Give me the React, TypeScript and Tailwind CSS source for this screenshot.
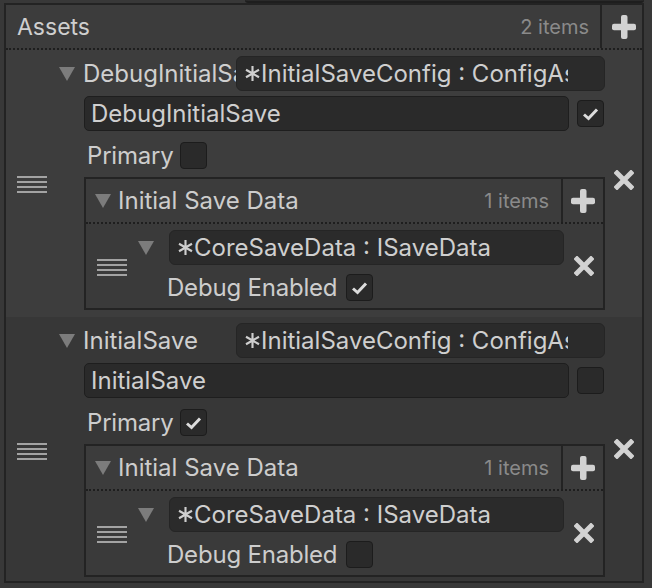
import React from 'react';

const font = { fontFamily: 'Inter, "Noto Sans", sans-serif' };

const Triangle = () => (
  <svg width="16" height="14" viewBox="0 0 16 14" className="shrink-0">
    <polygon points="0,0 16,0 8,14" fill="#7c7c7c" />
  </svg>
);

const Handle = () => (
  <svg width="30" height="18" viewBox="0 0 30 18">
    {[1, 6, 11, 16].map((y) => (
      <rect key={y} x="0" y={y - 1} width="30" height="2" fill="#a3a3a3" />
    ))}
  </svg>
);

const Plus = () => (
  <svg width="24" height="24" viewBox="0 0 24 24">
    <rect x="9" y="0" width="6.5" height="24" rx="2" fill="#d2d2d2" />
    <rect x="0" y="8.75" width="24" height="6.5" rx="2" fill="#d2d2d2" />
  </svg>
);

const Cross = () => (
  <svg width="20" height="20" viewBox="0 0 20 20">
    <path d="M3 3 L17 17 M17 3 L3 17" stroke="#d2d2d2" strokeWidth="5" strokeLinecap="square" />
  </svg>
);

const Star = () => (
  <svg width="17" height="17" viewBox="0 0 16 16" className="shrink-0">
    <path d="M8 1 V15 M1.9 4.5 L14.1 11.5 M1.9 11.5 L14.1 4.5" stroke="#cfcfcf" strokeWidth="2" />
  </svg>
);

const Check = ({ on }: { on: boolean }) => (
  <div className="w-[27px] h-[27px] shrink-0 rounded-[4px] bg-[#2a2a2a] border border-[#1c1c1c] flex items-center justify-center">
    {on && (
      <svg width="17" height="14" viewBox="0 0 17 14">
        <path d="M2 7.5 L6.5 11.5 L15 2.5" stroke="#dcdcdc" strokeWidth="3" fill="none" />
      </svg>
    )}
  </div>
);

const ObjectField = ({ text, w }: { text: string; w: string }) => (
  <div className={`${w} h-[35px] shrink-0 rounded-[6px] bg-[#2b2b2b] border border-[#252525] flex items-center pl-[7px] pr-[36px]`}>
    <Star />
    <span className="overflow-hidden whitespace-nowrap text-[24px] leading-[30px] text-[#cfcfcf]">{text}</span>
  </div>
);

const InnerList = ({ debug }: { debug: boolean }) => (
  <div className="ml-[26px] mt-[8px] w-[521px] border-2 border-[#232323] bg-[#3c3c3c]">
    <div className="h-[45px] flex border-b-2 border-dotted border-[#1e1e1e]">
      <div className="flex-1 flex items-center pl-[9px]">
        <Triangle />
        <span className="ml-[7px] text-[24px] leading-[30px] text-[#cdcdcd]">Initial Save Data</span>
        <span className="ml-auto mr-[12px] text-[20px] leading-[26px] text-[#8a8a8a]">1 items</span>
      </div>
      <div className="w-[42px] border-l-2 border-[#232323] flex items-center justify-center">
        <Plus />
      </div>
    </div>
    <div className="flex pt-[6px] pb-[7px] bg-[#3a3a3a]">
      <div className="w-[52px] shrink-0 flex items-center justify-center pt-[4px]">
        <Handle />
      </div>
      <div className="w-[427px] shrink-0">
        <div className="flex items-center">
          <Triangle />
          <div className="ml-[15px]">
            <ObjectField text="CoreSaveData : ISaveData" w="w-[395px]" />
          </div>
        </div>
        <div className="flex items-center mt-[9px] pl-[29px]">
          <span className="w-[179px] text-[24px] leading-[27px] tracking-[-0.2px] text-[#cdcdcd]">Debug Enabled</span>
          <Check on={debug} />
        </div>
      </div>
      <div className="w-[38px] shrink-0 flex items-center justify-center">
        <Cross />
      </div>
    </div>
  </div>
);

const Element = ({
  name,
  active,
  primary,
  debug,
  bg,
  pad,
  crossPad,
}: {
  name: string;
  active: boolean;
  primary: boolean;
  debug: boolean;
  bg: string;
  pad: string;
  crossPad: string;
}) => (
  <div className={`flex ${bg} ${pad}`}>
    <div className="w-[52px] shrink-0 flex items-center justify-center pt-[4px]">
      <Handle />
    </div>
    <div className="w-[547px] shrink-0">
      <div className="flex items-center h-[35px]">
        <div className="ml-[1px]">
          <Triangle />
        </div>
        <span className="ml-[8px] w-[153px] overflow-hidden whitespace-nowrap text-[24px] leading-[30px] text-[#cfcfcf]">
          {name}
        </span>
        <ObjectField text="InitialSaveConfig : ConfigAsset" w="w-[369px]" />
      </div>
      <div className="flex items-center mt-[5px] pl-[26px]">
        <div className="w-[485px] h-[35px] rounded-[5px] bg-[#2a2a2a] border border-[#1e1e1e] flex items-center pl-[6px] text-[24px] leading-[30px] text-[#cfcfcf]">
          {name}
        </div>
        <div className="ml-[8px]">
          <Check on={active} />
        </div>
      </div>
      <div className="flex items-center mt-[11px] pl-[29px]">
        <span className="w-[93px] text-[24px] leading-[27px] tracking-[-0.2px] text-[#cdcdcd]">Primary</span>
        <Check on={primary} />
      </div>
      <InnerList debug={debug} />
    </div>
    <div className={`w-[37px] shrink-0 flex items-center justify-center ${crossPad}`}>
      <Cross />
    </div>
  </div>
);

export default function App() {
  return (
    <div className="w-[652px] h-[588px] bg-[#383838] overflow-hidden" style={font}>
      <div className="h-[3px] flex">
        <div className="ml-[245px] w-[399px] h-[3px] bg-[#2a2a2a] border-b-2 border-[#1e1e1e] rounded-b-[5px]" />
      </div>
      <div className="ml-[4px] w-[640px] border-2 border-[#232323]">
        <div className="h-[45px] flex bg-[#3c3c3c] border-b-2 border-dotted border-[#1e1e1e]">
          <div className="flex-1 flex items-center pl-[11px]">
            <span className="text-[23px] leading-[30px] text-[#cfcfcf]">Assets</span>
            <span className="ml-auto mr-[11px] text-[20px] leading-[26px] text-[#8a8a8a]">2 items</span>
          </div>
          <div className="w-[42px] border-l-2 border-[#232323] flex items-center justify-center pl-[3px]">
            <Plus />
          </div>
        </div>
        <Element
          name="DebugInitialSave"
          active={true}
          primary={false}
          debug={true}
          bg="bg-[#3d3d3d]"
          pad="pt-[6px] pb-[7px]"
          crossPad="pb-[7px]"
        />
        <Element
          name="InitialSave"
          active={false}
          primary={true}
          debug={false}
          bg="bg-[#373737]"
          pad="pt-[6px] pb-[4px]"
          crossPad="pb-[3px]"
        />
      </div>
    </div>
  );
}
